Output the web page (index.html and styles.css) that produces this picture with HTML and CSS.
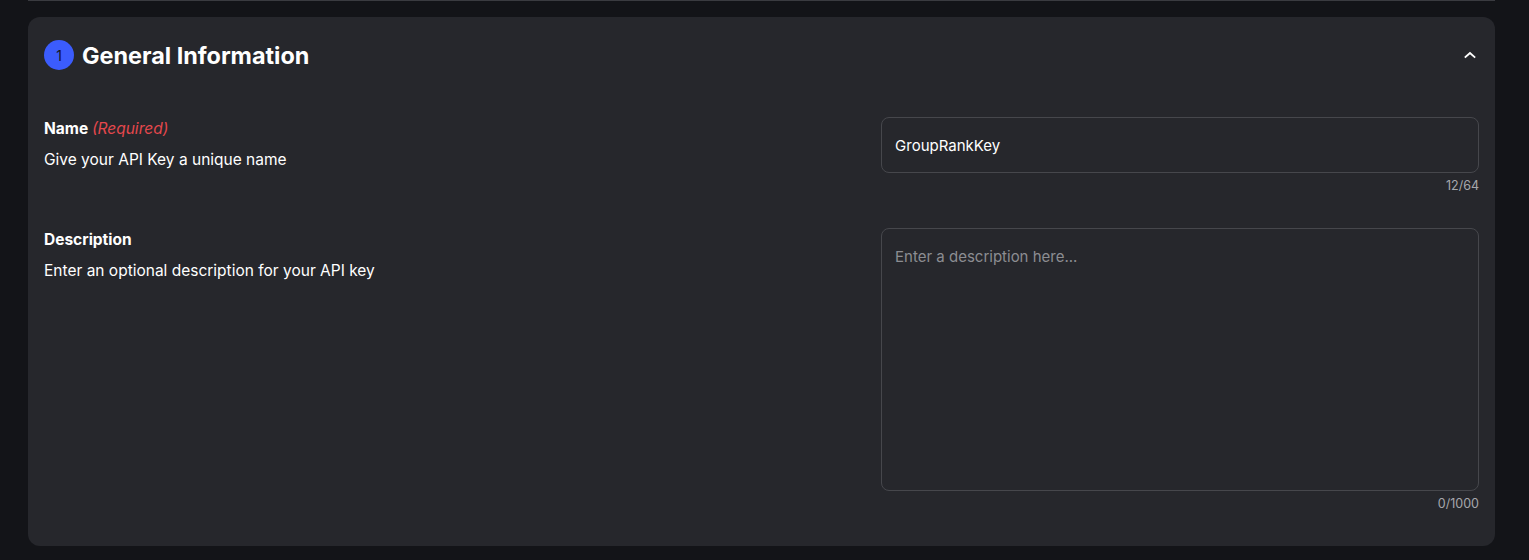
FILE: index.html
```html
<!DOCTYPE html>
<html lang="en">
<head>
<meta charset="utf-8">
<title>General Information</title>
<link rel="stylesheet" href="styles.css">
</head>
<body>
<div class="page">
  <div class="divider"></div>
  <section class="card">
    <header class="card-header">
      <div class="title-wrap">
        <span class="step">1</span>
        <h2 class="title">General Information</h2>
      </div>
      <button class="collapse" aria-label="Collapse">
        <svg width="12" height="8" viewBox="0 0 12 8"><path d="M1.5 6 L6 2 L10.5 6" fill="none" stroke="#ffffff" stroke-width="1.8" stroke-linecap="square"/></svg>
      </button>
    </header>
    <div class="row">
      <div class="info">
        <div class="label">Name <span class="req">(Required)</span></div>
        <div class="help">Give your API Key a unique name</div>
      </div>
      <div class="field">
        <div class="input">GroupRankKey</div>
        <div class="counter">12/64</div>
      </div>
    </div>
    <div class="row">
      <div class="info">
        <div class="label">Description</div>
        <div class="help">Enter an optional description for your API key</div>
      </div>
      <div class="field">
        <div class="textarea"><span class="placeholder">Enter a description here...</span></div>
        <div class="counter">0/1000</div>
      </div>
    </div>
  </section>
</div>
</body>
</html>
```

FILE: styles.css
```css
* { box-sizing: border-box; }
html, body { margin: 0; padding: 0; background: #131418; }
body { font-family: Inter, "Noto Sans", "Liberation Sans", sans-serif; color: #ffffff; }
.page { padding: 0 34px 14px 28px; height: 560px; }
.divider { height: 1px; background: #3a3b40; }
.card {
  margin-top: 16px;
  background: #26272c;
  border-radius: 12px;
  padding: 16px 16px 34px 16px;
  height: 529px;
}
.card-header { display: flex; align-items: center; justify-content: space-between; height: 44px; }
.title-wrap { display: flex; align-items: center; gap: 8px; }
.step {
  width: 30px; height: 30px; border-radius: 50%;
  background: #3b5cfd; color: #15161a;
  display: flex; align-items: center; justify-content: center;
  font-size: 14px; font-weight: 400;
}
.title { margin: 0; font-size: 23.4px; font-weight: 700; }
.collapse { background: none; border: 0; padding: 0; width: 22px; height: 22px; display: flex; align-items: center; justify-content: center; margin-right: -2px; }
.row { display: grid; grid-template-columns: 7fr 5fr; }
.row + .row { margin-top: 33px; }
.card-header + .row { margin-top: 40px; }
.info { padding-top: 1px; }
.label { font-size: 15.5px; font-weight: 700; line-height: 21px; }
.req { color: #e5484d; font-style: italic; font-weight: 400; }
.help { font-size: 15.5px; line-height: 22px; margin-top: 10px; }
.input {
  height: 56px; border: 1px solid #46474c; border-radius: 8px;
  padding: 0 13px; display: flex; align-items: center;
  font-size: 15px;
}
.textarea {
  height: 263px; border: 1px solid #46474c; border-radius: 8px;
  padding: 17px 13px; font-size: 15px; line-height: 22px;
}
.placeholder { color: #8c8d92; }
.counter { text-align: right; font-size: 12.5px; color: #a6a7ac; margin-top: 4px; line-height: 18px; }
```
